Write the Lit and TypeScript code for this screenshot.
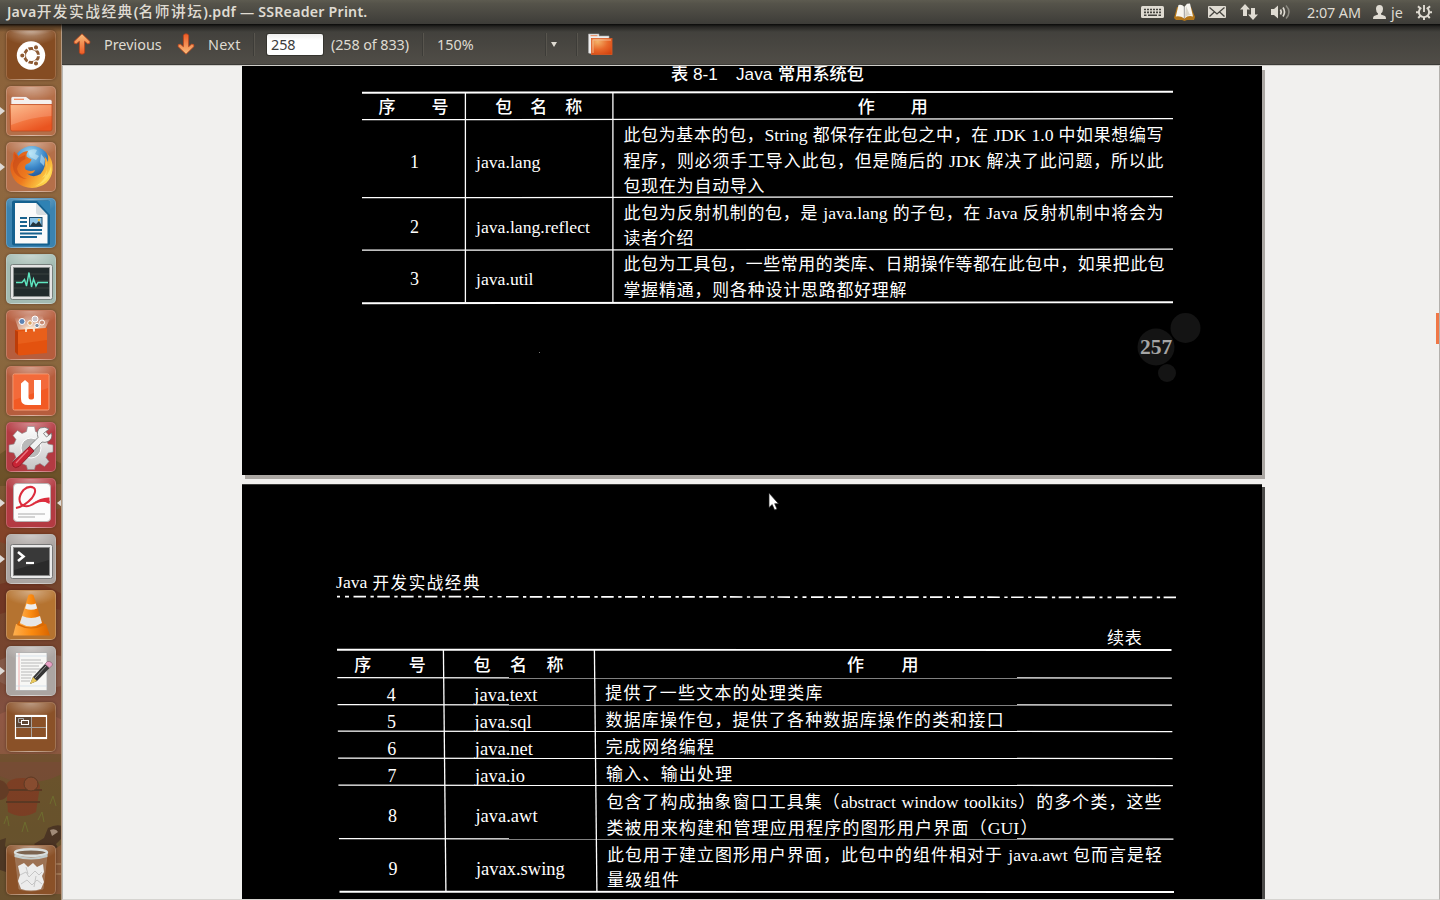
import { LitElement, html, svg, css, TemplateResult } from "lit";
import { customElement, property } from "lit/decorators.js";
import { styleMap } from "lit/directives/style-map.js";

/* Splits a line so that Latin runs can be set in their own size. */
const mixed = (s: string) =>
  s.split(/([A-Za-z0-9.][A-Za-z0-9. ]*[A-Za-z0-9.])/).map((t, i) => (i % 2 ? html`<span class="lat">${t}</span>` : t));

/* ---------- launcher icons, 50 x 50 each ---------- */
const ubuntu = svg`
  <defs><radialGradient id="dg" cx=".5" cy="0" r=".6"><stop offset="0" stop-color="#ffe9d8" stop-opacity=".6"/><stop offset="1" stop-color="#fff" stop-opacity="0"/></radialGradient></defs>
  <ellipse cx="25" cy="4" rx="22" ry="10" fill="url(#dg)"/>
  <circle cx="25" cy="25.500" r="14.200" fill="#fff"/>
  <circle cx="25.500" cy="25.500" r="7" fill="none" stroke="#8d5a33" stroke-width="3"/>
  <path d="M25.500 25.500L34.500 25.500M25.500 25.500L21 17.500M25.500 25.500L21 33.500" stroke="#fff" stroke-width="1.400"/>
  <circle cx="25.500" cy="25.500" r="5" fill="#fff"/>
  <g fill="#8d5a33" stroke="#fff" stroke-width="1.100"><circle cx="16.300" cy="25.500" r="2.600"/><circle cx="30" cy="17.400" r="2.600"/><circle cx="30" cy="33.500" r="2.600"/></g>`;
const files = svg`
  <defs><linearGradient id="fo" x1="0" y1="0" x2=".6" y2="1"><stop offset="0" stop-color="#fbb079"/><stop offset=".5" stop-color="#f58049"/><stop offset="1" stop-color="#e95420"/></linearGradient></defs>
  <path d="M5 18V12Q5 10.500 7 10.500H20L24 13.500H44Q46 13.500 46 15V20H5z" fill="#f4f0ee" stroke="#a9654a" stroke-width=".6"/>
  <path d="M8 13.300h10" stroke="#f0875c" stroke-width="1.200"/>
  <path d="M4 18.500H46V43Q46 45 44 45H6Q4.500 45 4.500 43z" fill="url(#fo)" stroke="#c24a1e" stroke-width=".8"/>
  <path d="M5 19.300H45.500V30Q25 31 5 39z" fill="#fff" opacity=".16"/>`;
const firefox = svg`
  <defs><radialGradient id="fb" cx=".45" cy=".2" r=".8"><stop offset="0" stop-color="#9fdcf5"/><stop offset=".5" stop-color="#3a86c8"/><stop offset="1" stop-color="#153a7c"/></radialGradient>
  <linearGradient id="ff" x1="0" y1="0" x2="1" y2=".6"><stop offset="0" stop-color="#d9541c"/><stop offset=".55" stop-color="#ee7a1e"/><stop offset="1" stop-color="#ffd84a"/></linearGradient></defs>
  <circle cx="26" cy="22.500" r="18.500" fill="url(#fb)"/>
  <path d="M22 9q5-3 9-1l-2 4 4 2-3 4-6-3zM35 12l4 5-1 7-4-4z" fill="#d2eef9" opacity=".55"/>
  <path d="M8 9.500Q11 11.500 12.500 14Q16 9.500 22 9Q20 12 20.500 14.500Q23 16.500 25.500 17Q25 21 20 22.500Q18 25 19.500 27.500Q24 30 29 28Q28 32.500 21 31.500Q27 36.500 34.500 32Q41 25 38.500 14Q41 17 42 20Q42.500 14 41 11Q47.500 18 46.500 28Q44.500 44.500 26 46Q8 45 4.500 28Q4 21 7 17Q6.500 13 8 9.500z" fill="url(#ff)"/>
  <path d="M8.500 11.500Q11 13.500 12.500 16L19 13L19.500 17Q12 20 11 27Q13 35 21 37Q14 37 9 31Q5 24 8.500 17z" fill="#b93b13" opacity=".4"/>
  <path d="M40 17Q44 28 36 36Q43 33 45 24Q47 38 29 44.500Q41 38 41 27z" fill="#ffe46b" opacity=".8"/>`;
const writer = svg`
  <rect x="6" y="2.500" width="38" height="45" rx="2" fill="#14608f"/>
  <path d="M9 5H30L41.500 17V45.500H9z" fill="#fafafa"/><path d="M31 3H44V17z" fill="#2f82b4"/><path d="M30 5L41.500 17H33Q30 17 30 14z" fill="#d6dde1"/>
  <path d="M14 20h7M14 24h7M14 28h7M14 32h22M14 35.500h22M14 39h17" stroke="#17628f" stroke-width="1.800"/>
  <rect x="23.500" y="19.500" width="12.500" height="9" fill="#8fc6e8" stroke="#1a4d6e"/><path d="M24 28l3-4 3 2 3-3 3 5z" fill="#23343c"/><circle cx="33" cy="22" r="1.300" fill="#f5c94c"/>`;
const monitor = svg`
  <rect x="4.500" y="10.500" width="42" height="35" rx="2" fill="#e3e3e3" stroke="#77807d"/>
  <rect x="7.500" y="13.500" width="36" height="29" fill="#222b2c" stroke="#8b8f8e"/>
  <path d="M8 20h35M8 27h35M8 34h35" stroke="#38423f" stroke-width="1"/>
  <path d="M10 28.500H16L18.500 25.500L20.500 32L23 18.500L25.500 33L27.500 25L30 32L32 28.500H42" fill="none" stroke="#5fe6c0" stroke-width="1.400"/>`;
const software = svg`
  <defs><radialGradient id="sc" cx=".5" cy=".9" r=".8"><stop offset="0" stop-color="#fff3dc"/><stop offset="1" stop-color="#fff" stop-opacity="0"/></radialGradient></defs>
  <path d="M8 6L16 9L22 3L28 8L36 4L38 10L44 9L38 21H13z" fill="url(#sc)"/>
  <g stroke="#fff" stroke-width="1"><circle cx="16" cy="11.500" r="3" fill="#5d83b3"/><circle cx="29" cy="9" r="3" fill="#c9c2c8"/><circle cx="36" cy="12.500" r="2.500" fill="#c88c74"/><circle cx="24" cy="13" r="2.300" fill="#dca35e"/><circle cx="31" cy="15.500" r="2.200" fill="#7e8fa3"/></g>
  <path d="M9 20L41 18V43L13 45.500L9 42z" fill="#e3520f"/><path d="M9 20L12 21.500V45L9 42z" fill="#bd3c08"/><path d="M12 21.500L41 18V30L12 34z" fill="#f0722e" opacity=".4"/>
  <path d="M20 22V19.500Q20 18 22 18H26Q28 18 28 19.500V21.500" fill="none" stroke="#f9e5cf" stroke-width="1.800"/>`;
const ubuntuOne = svg`
  <rect x="7" y="8" width="36" height="36" rx="1.500" fill="#f25a24" stroke="#f7a07a"/><path d="M8 9H42V22L8 34z" fill="#fff" opacity=".1"/>
  <path d="M15 17.500L19 14L22.500 17V31.500Q22.500 33.500 24.500 33.500H26Q28 33.500 28 31.500V14H35V39H22Q15 39 15 33z" fill="#fff"/>`;
const settings = svg`
  <defs><linearGradient id="ge" x1="0" y1="0" x2="0" y2="1"><stop offset="0" stop-color="#fff"/><stop offset="1" stop-color="#c4c4c4"/></linearGradient></defs>
  <path d="M21.500 4.500h7l1 5 4.500 2 4.500-3 4.500 5-3 4 2 4.500 5 1v7l-5 1-2 4.500 3 4-4.500 5-4.500-3-4.500 2-1 4h-7l-1-4-4.500-2-4.500 3-4.500-5 3-4-2-4.500-5-1v-7l5-1 2-4.500-3-4 4.500-5 4.500 3 4.500-2z" fill="url(#ge)" stroke="#8b8b8b" stroke-width=".6"/>
  <circle cx="25" cy="26" r="10" fill="#b9b9b9" stroke="#fff"/>
  <path d="M34 6Q39 4 43 7L37.500 11.500L40.500 15L45.500 11Q47 17 42 19.500Q39 21 36 20L28 28.500L23.500 24L32 15.500Q30 9 34 6z" fill="#f3f3f3" stroke="#6f6f6f" stroke-width=".8"/>
  <path d="M23.500 24.500L28 29L13 44.500Q9 47 7 44Q5.500 41 8 39z" fill="#c92435" stroke="#861320" stroke-width=".8"/><path d="M22 28L10 41" stroke="#ec7480" stroke-width="1.300"/>`;
const pdf = svg`
  <rect x="7.500" y="5.500" width="37" height="38" rx="3.500" fill="#fcfcfc" stroke="#b9b0b0"/>
  <path d="M10 30Q19 28 26 20Q31 13 28 10Q23 7 17.500 12Q11 20 15 26Q20 31 29 25Q36 21 43.500 24" fill="none" stroke="#dc2c3c" stroke-width="2"/>
  <path d="M26 25.500Q35 19 43.500 19.500V26Q36 21 26 25.500z" fill="#dc2c3c"/>
  <path d="M12 36h27M12 39h17" stroke="#c5c5c5" stroke-width="1.300"/>`;
const terminal = svg`
  <rect x="4.500" y="10.500" width="42" height="34" rx="2" fill="#e9e9e9" stroke="#777"/><rect x="7.500" y="13.500" width="36" height="28" fill="#2b2b2b" stroke="#888"/>
  <path d="M8 14h35v12L8 36z" fill="#fff" opacity=".07"/><path d="M12 18L17.500 22.500L12 27" fill="none" stroke="#fff" stroke-width="2.600"/><path d="M20 29h8" stroke="#fff" stroke-width="2.200"/>`;
const vlc = svg`
  <defs><linearGradient id="vl" x1="0" y1="0" x2="1" y2="0"><stop offset="0" stop-color="#ffb04f"/><stop offset=".5" stop-color="#fa8a10"/><stop offset="1" stop-color="#d96500"/></linearGradient></defs>
  <path d="M10 34H40L44 45.500H7z" fill="url(#vl)"/><path d="M11 35Q25 42 39 35L37 31H13z" fill="#d96b06"/>
  <path d="M22.500 5Q25 3.500 27.500 5L36.500 34Q25 41 13.500 34z" fill="url(#vl)"/>
  <path d="M20.600 13.500Q25 15.500 29.700 13.500L31.200 18.500Q25 21 19 18.500z" fill="#eee"/><path d="M16.200 26Q25 30 34 26L36 33Q25 40 14 33z" fill="#e6e6e6"/>`;
const gedit = svg`
  <path d="M9.500 6.500H41V44.500H9.500z" fill="#f7f7f5" stroke="#a9a9a9" stroke-width=".8"/><path d="M13 7V44" stroke="#f2a0a0" stroke-width=".8"/><path d="M10 10h31M10 40h31" stroke="#c8d8e8" stroke-width=".7"/>
  <path d="M15 14h20M15 17h22M15 20h18M15 23h20M15 26h15M15 29h11M15 32h10M15 35h9" stroke="#b9b9b9" stroke-width="1"/>
  <path d="M24 38L27 31L39 18L43.500 22L31 35z" fill="#353535"/><path d="M24 38L27 31L31 35z" fill="#e9c85a"/><path d="M39 18L41.500 15.500Q46 15 46.500 19L43.500 22z" fill="#e79fc4" stroke="#7f5a6c" stroke-width=".6"/><path d="M29 32L40 20" stroke="#9a9a9a" stroke-width="1"/>`;
const workspace = svg`
  <rect x="9.500" y="13.500" width="31" height="23" fill="none" stroke="#fff" stroke-width="1.200"/><rect x="10" y="14" width="15" height="11" fill="#5e4634"/>
  <path d="M25.500 14V36M10 25.500H40" stroke="#a9a39e" stroke-width="1"/><path d="M9 14H41M9 36H41" stroke="#fff" stroke-width="2"/>
  <path d="M12.500 16.500h5v4h-5z" fill="none" stroke="#aaa"/><rect x="15.500" y="18.500" width="7" height="4" fill="#5e4634" stroke="#fff"/>`;
const trash = svg`
  <path d="M9 10L13 44Q25 48 37 44L41 10z" fill="#cfc9c4" opacity=".28" stroke="#e6e6e6" stroke-width=".8"/>
  <path d="M12 21L18 18L22 22L27 18L31 22L37 19L38 27L36 31L38 37L35 44Q25 47 15 44L12 36L14 30z" fill="#ececec"/>
  <path d="M14 30L20 27L23 32L29 26L33 30L36 27M15 39L21 35L26 40L31 35L36 39M20 22L22 29M30 31L28 42" stroke="#c6c6c6" stroke-width="1" fill="none"/>
  <ellipse cx="25" cy="7.500" rx="16" ry="3.300" fill="#7b634f" stroke="#d9dedd" stroke-width="2.400"/><path d="M8.500 9Q25 16 41.500 9V12Q25 17 8.500 12z" fill="#c3cccb"/>`;

const launcherItems: { cls: string; art: TemplateResult<2>; run?: boolean; active?: boolean }[] = [
  { cls: "dash", art: ubuntu },
  { cls: "terra", art: files, run: true },
  { cls: "terra", art: firefox, run: true },
  { cls: "blue", art: writer },
  { cls: "mint", art: monitor },
  { cls: "rust", art: software },
  { cls: "rust", art: ubuntuOne },
  { cls: "red", art: settings },
  { cls: "red", art: pdf, run: true, active: true },
  { cls: "grey", art: terminal, run: true },
  { cls: "amber", art: vlc },
  { cls: "grey", art: gedit, run: true },
  { cls: "brown", art: workspace },
];

/* ---------- Unity launcher ---------- */
@customElement("unity-launcher")
export class UnityLauncher extends LitElement {
  static styles = css`
    :host { position: relative; display: flex; flex-direction: column; gap: 6px; width: 62px; box-sizing: border-box; padding: 6px 0 5px 6px; overflow: hidden;
      background: linear-gradient(180deg, #8a6038 0, #8f673f 15%, #8b6840 35%, #86653a 47%, #7a5432 55%, #75462e 62%, #77452f 72%, #825040 78%, #71502f 84%, #6a4f30 92%, #6b4b34 100%); }
    :host::after { content: ""; position: absolute; top: 0; bottom: 0; right: 0; width: 1px; background: #b59a82; }
    .scene { position: absolute; left: 0; top: 400px; }
    .item { position: relative; width: 50px; height: 50px; flex: none; }
    .item.last { margin-top: auto; }
    .tile { display: block; width: 50px; height: 50px; border-radius: 5px; box-sizing: border-box; border: 1px solid rgba(255,255,255,.2);
      box-shadow: 0 0 3px rgba(40,15,0,.45); background-image: radial-gradient(ellipse 60% 30% at 50% 0, rgba(255,255,255,.42), rgba(255,255,255,0)); }
    .art { position: absolute; inset: 0; width: 50px; height: 50px; }
    .dash { background-color: #854c22; border-color: rgba(255,220,190,.22); }
    .terra { background-color: #b46f49; }
    .blue { background-color: #3b83b0; }
    .mint { background-color: #a3bbb2; }
    .rust { background-color: #b65d3d; }
    .red { background-color: #b33a42; }
    .grey { background-color: #aba5a2; }
    .amber { background-color: #b57330; }
    .brown { background-color: #8a5128; }
    .pip, .pip-r { position: absolute; top: 21px; width: 0; height: 0; border: 4px solid transparent; }
    .pip { left: -6px; border-left: 5px solid #dedad6; border-right: 0; }
    .pip-r { right: -6px; border-right: 5px solid #dedad6; border-left: 0; }
  `;
  render() {
    return html`
      <svg class="scene" width="62" height="476" viewBox="0 0 62 476">
        <g opacity=".5">
          <path d="M0 30L12 22L24 34L40 28L62 40V60L0 62z" fill="#5c4a1f"/><path d="M0 80L20 74L40 90L62 84V120L30 128L0 118z" fill="#8f3a22"/>
          <path d="M0 160Q30 150 62 170V186Q30 180 0 190z" fill="#6e2a1c"/><path d="M0 236Q20 226 62 232V262Q20 270 0 258z" fill="#8e6a5c"/>
          <path d="M0 290Q30 276 62 296V330H0z" fill="#a2604e"/><path d="M0 372Q20 356 62 350V476H0z" fill="#66562a"/>
          <path d="M0 338H62V350Q30 366 0 352z" fill="#7c4a3a"/>
          <path d="M6 362Q8 354 22 354Q38 354 40 362L36 388Q22 396 8 388z" fill="#8a2f1a"/><path d="M4 366H42M6 378H40" stroke="#4a2318" stroke-width="2"/>
          <circle cx="31" cy="360" r="7" fill="#a04a30" stroke="#4a2318"/>
          <path d="M0 356Q8 358 9 368Q6 376 0 376z" fill="#5a2a1c"/><path d="M34 420L44 414L48 404Q56 400 62 402V414L56 420L60 428L48 432L40 426z" fill="#2d1c18"/><path d="M50 406Q56 404 58 408L52 412z" fill="#d8c8c0"/><path d="M48 430L62 420V470H50z" fill="#a0603c"/><path d="M48 440H62M48 450H62" stroke="#d09a70" stroke-width="2"/>
          <path d="M0 416L6 414L5 422L14 432L15 440L6 448L0 446z" fill="#332318"/><path d="M4 400L7 392L9 402M22 408L25 398L28 408M38 396L42 388L44 398M50 380L53 372L56 382" stroke="#6f8a2e" fill="none"/>
        </g>
      </svg>
      ${launcherItems.map((i) => html`<div class="item"><span class="tile ${i.cls}"></span><svg class="art" viewBox="0 0 50 50">${i.art}</svg>
        ${i.run ? html`<i class="pip"></i>` : ""}${i.active ? html`<i class="pip-r"></i>` : ""}</div>`)}
      <div class="item last"><span class="tile brown"></span><svg class="art" viewBox="0 0 50 50">${trash}</svg></div>`;
  }
}

/* ---------- scanned table ---------- */
interface Row { n: string; name: string; h: number; lines: [string, number][] }

@customElement("scan-table")
export class ScanTable extends LitElement {
  @property({ attribute: false }) rows: Row[] = [];
  @property({ attribute: false }) cols: number[] = [];
  @property({ type: Number }) head = 27;
  @property({ type: Number }) indent = 11;
  @property({ type: Number }) headGap = 36;
  @property({ type: Number }) nameGap = 18;
  @property({ type: Number }) nameSize = 17.7;
  @property({ type: Number }) drop = 3;
  @property({ type: Number }) drift = 0;
  @property({ type: Number }) tilt = -1;
  static styles = css`
    :host { display: block; position: relative; color: #fff; font-family: "Liberation Serif", "Noto Sans CJK SC", serif; }
    .lines { position: absolute; left: 0; top: 0; overflow: visible; }
    .row { display: grid; align-items: center; }
    .h { display: flex; justify-content: center; font: 500 17px "Noto Sans CJK SC", sans-serif; line-height: 24px; padding-top: 2px; }
    .n { text-align: center; font-size: 18px; padding: 4px 0 0 2px; }
    .name { padding-top: 4px; white-space: nowrap; }
    .text { padding-left: 11px; }
    .line { font-size: 16.900px; line-height: 26.200px; height: 26.200px; font-weight: 400; white-space: nowrap; text-align: justify; text-align-last: justify; }
    .lat { font-size: 17.700px; font-weight: 400; }
  `;
  render() {
    const [a, b, c] = this.cols;
    const w = a + b + c;
    const grid = { gridTemplateColumns: `${a}px ${b}px ${c}px` };
    const ys = [0, this.head];
    this.rows.forEach((r) => ys.push(ys[ys.length - 1] + r.h));
    const H = ys[ys.length - 1];
    const spread = (s: string, gap: number) => html`<div class="h" style=${styleMap({ gap: `${gap}px` })}>${[...s].map((x) => html`<span>${x}</span>`)}</div>`;
    let y = this.head;
    return html`
      <svg class="lines" width=${w} height=${H}>
        ${ys.map((v, i) => {
          const d = (this.drift * v) / H;
          const edge = i === 0 || i === ys.length - 1;
          return svg`<line x1=${d} x2=${w + d} y1=${v + 0.7} y2=${v + 0.7 + this.tilt} stroke="#fff" stroke-width=${edge ? 1.9 : 1.25}/>`;
        })}
        ${[a, a + b].map((x) => svg`<line x1=${x + 0.4} x2=${x + 0.4 + this.drift} y1="0" y2=${H} stroke="#fff" stroke-width="1.300"/>`)}
      </svg>
      <div class="row" style=${styleMap({ ...grid, height: `${this.head}px` })}>${spread("序号", this.headGap)}${spread("包名称", this.nameGap)}${spread("作用", this.headGap)}</div>
      ${this.rows.map((r) => {
        const d = (this.drift * y) / H;
        y += r.h;
        return html`<div class="row" style=${styleMap({ ...grid, height: `${r.h}px`, marginLeft: `${d}px` })}>
          <div class="n" style=${styleMap({ paddingTop: `${this.drop + 3}px` })}>${r.n}</div><div class="name" style=${styleMap({ paddingLeft: `${this.indent}px`, paddingTop: `${this.drop + 3.5}px`, fontSize: `${this.nameSize}px` })}>${r.name}</div>
          <div class="text" style=${styleMap({ paddingTop: `${this.drop}px` })}>${r.lines.map(([t, lw]) => html`<div class="line" style=${styleMap({ width: `${lw}px` })}>${mixed(t)}</div>`)}</div></div>`;
      })}`;
  }
}

const firstRows: Row[] = [
  { n: "1", name: "java.lang", h: 78, lines: [["此包为基本的包，String 都保存在此包之中，在 JDK 1.0 中如果想编写", 540], ["程序，则必须手工导入此包，但是随后的 JDK 解决了此问题，所以此", 540], ["包现在为自动导入", 141]] },
  { n: "2", name: "java.lang.reflect", h: 52.5, lines: [["此包为反射机制的包，是 java.lang 的子包，在 Java 反射机制中将会为", 540], ["读者介绍", 70]] },
  { n: "3", name: "java.util", h: 53, lines: [["此包为工具包，一些常用的类库、日期操作等都在此包中，如果把此包", 541], ["掌握精通，则各种设计思路都好理解", 283]] },
];
const secondRows: Row[] = [
  { n: "4", name: "java.text", h: 27, lines: [["提供了一些文本的处理类库", 217]] },
  { n: "5", name: "java.sql", h: 26.5, lines: [["数据库操作包，提供了各种数据库操作的类和接口", 398]] },
  { n: "6", name: "java.net", h: 27, lines: [["完成网络编程", 108]] },
  { n: "7", name: "java.io", h: 27, lines: [["输入、输出处理", 126]] },
  { n: "8", name: "java.awt", h: 53.5, lines: [["包含了构成抽象窗口工具集（abstract window toolkits）的多个类，这些", 555], ["类被用来构建和管理应用程序的图形用户界面（GUI）", 431]] },
  { n: "9", name: "javax.swing", h: 53, lines: [["此包用于建立图形用户界面，此包中的组件相对于 java.awt 包而言是轻", 555], ["量级组件", 72]] },
];

const toolArrow = (down: boolean) => html`<svg class="arrow" width="18" height="22" viewBox="0 0 18 22">
  <defs><linearGradient id="ar" x1="0" y1=${down ? 1 : 0} x2="0" y2=${down ? 0 : 1}><stop offset="0" stop-color=${down ? "#f0622a" : "#f8bd7c"}/><stop offset="1" stop-color=${down ? "#f8bd7c" : "#ee5a24"}/></linearGradient></defs>
  <path transform=${down ? "rotate(180 9 11)" : ""} d="M9 .8L17 8.500Q17.500 11.300 14.500 10.800L11.600 8.300V19.500Q11.400 21.200 9 21.200Q6.600 21.200 6.400 19.500V8.300L3.500 10.800Q.5 11.300 1 8.500z" fill="url(#ar)" stroke="#b9431b" stroke-width=".8"/></svg>`;

@customElement("app-root")
export class AppRoot extends LitElement {
  static styles = css`
    :host { display: flex; flex-direction: column; width: 1440px; height: 900px; overflow: hidden; position: relative; font-family: "Noto Sans", "Open Sans", "Noto Sans CJK SC", sans-serif; color: #dfdbd2; }
    .panel { height: 24px; flex: none; display: flex; align-items: center; background: linear-gradient(#5d5b50, #55534a 15%, #3d3c38); }
    .title { padding-left: 7px; font-size: 14.200px; font-weight: 600; white-space: nowrap; letter-spacing: .22px; line-height: 24px; height: 24px; }
    .title .cj { font: 500 14.700px "Noto Sans CJK SC", sans-serif; line-height: 20px; letter-spacing: 1.500px; }
    .tray { margin-left: auto; display: flex; align-items: center; padding-right: 8px; font-size: 14.400px; white-space: nowrap; }
    .tray svg { display: block; }
    .clock { width: 54px; margin: 0 12px 0 16px; letter-spacing: -.1px; }
    .user { width: 12px; margin: 0 13px 0 5px; }
    .g10 { margin-left: 10px; } .g13 { margin-left: 13px; } .g14 { margin-left: 14px; }
    .main { flex: 1; display: flex; min-height: 0; position: relative; }
    .shade { position: absolute; left: 0; right: 0; top: 0; height: 8px; background: linear-gradient(rgba(0,0,0,.85), rgba(0,0,0,.4) 35%, rgba(0,0,0,0)); }
    .app { flex: 1; display: flex; flex-direction: column; min-width: 0; }
    .bar { height: 41px; box-sizing: border-box; flex: none; display: flex; align-items: center; padding-left: 11px; background: linear-gradient(#3f3e3a, #504d47); border-bottom: 1px solid #3c3b37; font-size: 14.400px; white-space: nowrap; }
    .arrow { display: block; }
    .prev { width: 57px; margin: 0 16px 0 13px; }
    .next { width: 33px; margin: 0 12px 0 13px; letter-spacing: .3px; }
    .sep { width: 1px; height: 23px; background: #3d3c38; border-right: 1px solid #58554e; box-sizing: content-box; }
    .entry { width: 56px; height: 21px; margin: 0 8px 0 12px; box-sizing: border-box; border-radius: 2px; background: linear-gradient(#eee, #fff 30%); color: #3c3c3c; padding-left: 4px; line-height: 21px; box-shadow: 0 0 0 1px #35342f; letter-spacing: -.1px; }
    .total { width: 78px; margin-right: 13px; letter-spacing: -.1px; }
    .zoom { width: 36px; margin: 0 72px 0 13px; letter-spacing: 0; }
    .caret { width: 0; border: 3.500px solid transparent; border-top: 5px solid #dfdbd2; border-bottom: 0; margin: 0 19px 0 4px; }
    .folder { margin-left: 10px; display: block; }
    .view { flex: 1; min-height: 0; box-sizing: border-box; border-top: 1px solid #cfcdc8; border-left: 1px solid #b9b7b3; border-right: 1px solid #b4b1ad; border-bottom: 1px solid #d6d4d0; background: #f1f0ee; display: flex; overflow: hidden; position: relative; }
    .pages { margin-left: 179px; display: flex; flex-direction: column; gap: 9px; }
    .page { width: 1020px; background: #000; box-sizing: border-box; color: #fff; display: flex; flex-direction: column; flex: none; }
    .one { height: 409px; box-shadow: 3px 4px 0 #aba7a3; clip-path: inset(0 -3px -4px 0); padding-left: 120px; }
    .two { height: 420px; border-top: 1px solid #3a3a38; box-shadow: 3px 3px 0 #4b4a48; padding-left: 95px; }
    .caption { font: 17.200px "Liberation Sans", "Noto Sans CJK SC", sans-serif; line-height: 17px; height: 16px; margin: 0 0 9.500px 309px; display: flex; white-space: pre; }
    .caption .a { width: 22px; } .caption .b { width: 43px; } .caption .c { width: 42px; }
    .caption .a, .caption .d { font-weight: 450; }
    .folio { margin: 10px 0 0 774px; width: 64px; height: 72px; position: relative; display: grid; }
    .folio svg { grid-area: 1/1; }
    .folio b { grid-area: 1/1; position: relative; padding: 23px 0 0 4px; font: bold 21.500px/24px "Liberation Serif", serif; color: #a5a5a5; }
    .running { margin-top: 87px; margin-left: -1px; height: 20px; display: flex; gap: 5px; font: 17.700px/20px "Liberation Serif", serif; align-items: center; }
    .running span + span { font: 400 16.500px/20px "Noto Sans CJK SC", sans-serif; letter-spacing: 1.600px; }
    .rule { display: block; margin-top: 2px; }
    .cont { font: 400 17px/20px "Noto Sans CJK SC", sans-serif; margin: 27px 0 2px 770px; letter-spacing: .8px; }
    .thumb { position: absolute; right: 0; top: 247px; width: 3px; height: 31px; background: #f07746; }
    .speck { position: absolute; width: 1px; height: 1px; background: #777; left: 476px; top: 286px; }
    .cursor { position: absolute; left: 768px; top: 492px; }
  `;
  render() {
    return html`
      <div class="panel">
        <div class="title">Java<span class="cj">开发实战经典</span>(<span class="cj">名师讲坛</span>).pdf — SSReader Print.</div>
        <div class="tray">
          <svg width="23" height="14" viewBox="0 0 23 14"><rect x="0" y="1" width="23" height="12" rx="1.500" fill="#dfdbd2"/><path d="M3 4.500h17M3 7.300h17" stroke="#45443f" stroke-width="1.700" stroke-dasharray="2 1"/><path d="M3 10.200h2.500M7 10.200h9M17.500 10.200h2.500" stroke="#45443f" stroke-width="1.500"/></svg>
          <svg class="g10" width="21" height="18" viewBox="0 0 21 18"><path d="M3 4L0 15L2 17H8L10.500 18L13 17H20L21 14L17 4z" fill="#b3761a"/><path d="M4.500 2Q8 1 10.300 4L13 .8L16 .5L19 13.500Q14 12 10.500 15.500Q6 12.500 1.800 13.500z" fill="#f7f5ef"/><path d="M10.300 4V15.500" stroke="#999" stroke-width="1"/><path d="M12 3L15.500 11L18 12Q14 11.500 11 14z" fill="#d9d5ca"/></svg>
          <svg class="g13" width="18" height="12" viewBox="0 0 18 12"><rect width="18" height="12" rx="1" fill="#dfdbd2"/><path d="M1.500 1.500L9 8L16.500 1.500M1.500 10.500L6.300 6M16.500 10.500L11.700 6" fill="none" stroke="#45443f" stroke-width="1.300"/></svg>
          <svg class="g14" width="18" height="16" viewBox="0 0 18 16"><path d="M5 0L10 5.500H7V12H3V5.500H0zM13 16L8 10.500H11V4H15V10.500H18z" fill="#dfdbd2"/></svg>
          <svg class="g13" width="20" height="16" viewBox="0 0 20 16"><path d="M0 5h3L7 1.500V14.500L3 11H0z" fill="#dfdbd2"/><path d="M9.500 5.500Q11 8 9.500 10.500M12 3.500Q15 8 12 12.500" fill="none" stroke="#dfdbd2" stroke-width="1.700"/><path d="M15 1.500Q21 8 15 14.500" fill="none" stroke="#8b8981" stroke-width="1.500"/></svg>
          <span class="clock">2:07 AM</span>
          <svg width="13" height="14" viewBox="0 0 13 14"><path d="M6.500 0Q10 0 10 4Q10 7 8 8.500V9.500L12 11Q13 11.500 13 14H0Q0 11.500 1 11L5 9.500V8.500Q3 7 3 4Q3 0 6.500 0z" fill="#dfdbd2"/></svg>
          <span class="user">je</span>
          <svg width="16" height="16" viewBox="0 0 16 16"><g stroke="#dfdbd2" fill="none"><path d="M5.300 3.700A5.100 5.100 0 1 0 10.700 3.700" stroke-width="1.900"/><path d="M8 1V8" stroke-width="1.900"/><path d="M8 13V16M0 8.200H3M13 8.200H16M2 2.200L4.400 4.600M14 2.200L11.600 4.600M2.200 14L4.400 11.800M13.800 14L11.600 11.800" stroke-width="2"/></g></svg>
        </div>
      </div>
      <div class="main">
        <unity-launcher></unity-launcher>
        <div class="app">
          <div class="bar">
            ${toolArrow(false)}<span class="prev">Previous</span>${toolArrow(true)}<span class="next">Next</span>
            <i class="sep"></i><span class="entry">258</span><span class="total">(258 of 833)</span>
            <i class="sep"></i><span class="zoom">150%</span><i class="sep"></i><i class="caret"></i><i class="sep"></i>
            <svg class="folder" width="25" height="22" viewBox="0 0 25 22"><defs><radialGradient id="tf" cx=".3" cy=".2" r="1"><stop offset="0" stop-color="#f3b268"/><stop offset=".5" stop-color="#e8692b"/><stop offset="1" stop-color="#d23f0c"/></radialGradient></defs>
              <path d="M.5 20V1H11V3H21V8L4 21z" fill="#eee" stroke="#aaa" stroke-width=".6"/><path d="M2.500 2.700h7" stroke="#ec8352" stroke-width="1"/><rect x="3.500" y="5.500" width="20.500" height="16" fill="url(#tf)" stroke="#dc5a24" stroke-width=".8"/><path d="M5 20V7H23" fill="none" stroke="#f5bd92" stroke-width=".9"/></svg>
          </div>
          <div class="view">
            <div class="pages">
              <section class="page one">
                <div class="caption"><span class="a">表</span><span class="b">8-1</span><span class="c">Java</span><span class="d">常用系统包</span></div>
                <scan-table .rows=${firstRows} .cols=${[103, 147.5, 560.5]}></scan-table>
                <div class="folio">
                  <svg width="70" height="72" viewBox="0 0 70 72"><g fill="#141414"><circle cx="20" cy="35" r="18.500"/><circle cx="49.500" cy="16" r="15"/><circle cx="31" cy="61" r="9"/></g></svg><b>257</b>
                </div>
              </section>
              <section class="page two">
                <div class="running"><span>Java</span><span>开发实战经典</span></div>
                <svg class="rule" width="842" height="6"><line x1="0" x2="839" y1="2.600" y2="3.400" stroke="#fff" stroke-width="1.700" stroke-dasharray="3 5 4 4.500 12.500 4.500 3.300 3.500 12.500 4.500 3.300 3.500 12.500 4.500 3.300 3.500 12.500 4.500 3.300 3.500 12.500 4.500 3.300 3.500 12.500 4.500"/></svg>
                <div class="cont">续表</div>
                <scan-table .rows=${secondRows} .cols=${[106, 151, 577.5]} .head=${28} .indent=${31} .headGap=${37.5} .nameGap=${19.5} .nameSize=${18.5} .drop=${4} .drift=${2.5} .tilt=${0.3}></scan-table>
              </section>
            </div>
            <i class="speck"></i><i class="thumb"></i>
          </div>
        </div>
        <div class="shade"></div>
      </div>
      <svg class="cursor" width="12" height="19" viewBox="0 0 12 19"><path d="M1 1V15.500L4.200 12.600L6.600 18L9 17L6.700 11.700H10.500z" fill="#fff" stroke="#222" stroke-width=".7"/></svg>`;
  }
}
